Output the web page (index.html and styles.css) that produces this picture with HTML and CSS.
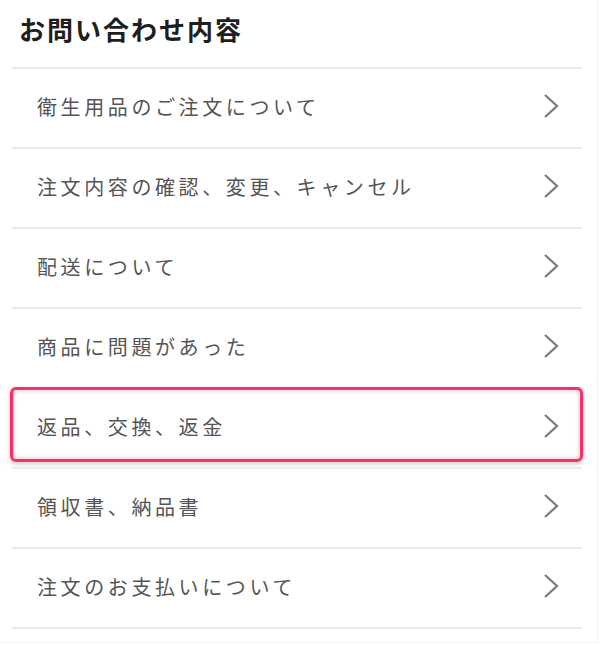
FILE: index.html
```html
<!DOCTYPE html>
<html lang="ja">
<head>
<meta charset="utf-8">
<title>お問い合わせ内容</title>
<link rel="stylesheet" href="styles.css">
</head>
<body>
<div class="page">
  <h1 class="title">お問い合わせ内容</h1>
  <ul class="menu">
    <li class="item"><span class="label">衛生用品のご注文について</span><svg class="chev" viewBox="0 0 16 26"><path d="M2 2 L14 13 L2 24"/></svg></li>
    <li class="item"><span class="label">注文内容の確認、変更、キャンセル</span><svg class="chev" viewBox="0 0 16 26"><path d="M2 2 L14 13 L2 24"/></svg></li>
    <li class="item"><span class="label">配送について</span><svg class="chev" viewBox="0 0 16 26"><path d="M2 2 L14 13 L2 24"/></svg></li>
    <li class="item"><span class="label">商品に問題があった</span><svg class="chev" viewBox="0 0 16 26"><path d="M2 2 L14 13 L2 24"/></svg></li>
    <li class="item active"><span class="label">返品、交換、返金</span><svg class="chev" viewBox="0 0 16 26"><path d="M2 2 L14 13 L2 24"/></svg></li>
    <li class="item"><span class="label">領収書、納品書</span><svg class="chev" viewBox="0 0 16 26"><path d="M2 2 L14 13 L2 24"/></svg></li>
    <li class="item"><span class="label">注文のお支払いについて</span><svg class="chev" viewBox="0 0 16 26"><path d="M2 2 L14 13 L2 24"/></svg></li>
  </ul>
</div>
</body>
</html>
```

FILE: styles.css
```css
html, body {
  margin: 0;
  padding: 0;
  background: #fff;
}
.page {
  width: 597px;
  height: 642px;
  border-right: 1px solid #f0f0f0;
  border-bottom: 1px solid #f0f0f0;
  font-family: "Noto Sans CJK JP", "Noto Sans", sans-serif;
  box-sizing: content-box;
}
.title {
  margin: 0;
  padding: 12px 0 0 19px;
  height: 67px;
  box-sizing: border-box;
  font-size: 26px;
  line-height: 34px;
  font-weight: 700;
  letter-spacing: 2px;
  color: #1e1e1e;
}
.menu {
  list-style: none;
  margin: 0 0 0 12px;
  padding: 0;
  width: 570px;
}
.item {
  position: relative;
  display: flex;
  align-items: center;
  justify-content: space-between;
  box-sizing: border-box;
  height: 80px;
  border-top: 2px solid #ececec;
  padding: 0 23px 4px 25px;
}
.item:last-child {
  height: 82px;
  border-bottom: 2px solid #ececec;
}
.label {
  font-size: 20px;
  letter-spacing: 3.6px;
  color: #555;
}
.chev {
  width: 16px;
  height: 26px;
  fill: none;
  stroke: #7a7a7a;
  stroke-width: 2.2;
}
.active::after {
  content: "";
  position: absolute;
  left: -2px;
  right: -1px;
  top: -2px;
  height: 75px;
  box-sizing: border-box;
  border: 3px solid #ff2d64;
  border-radius: 6px;
  box-shadow: inset 0 0 5px rgba(0,0,0,0.25), 0 2px 5px rgba(0,0,0,0.2);
  pointer-events: none;
}
```
